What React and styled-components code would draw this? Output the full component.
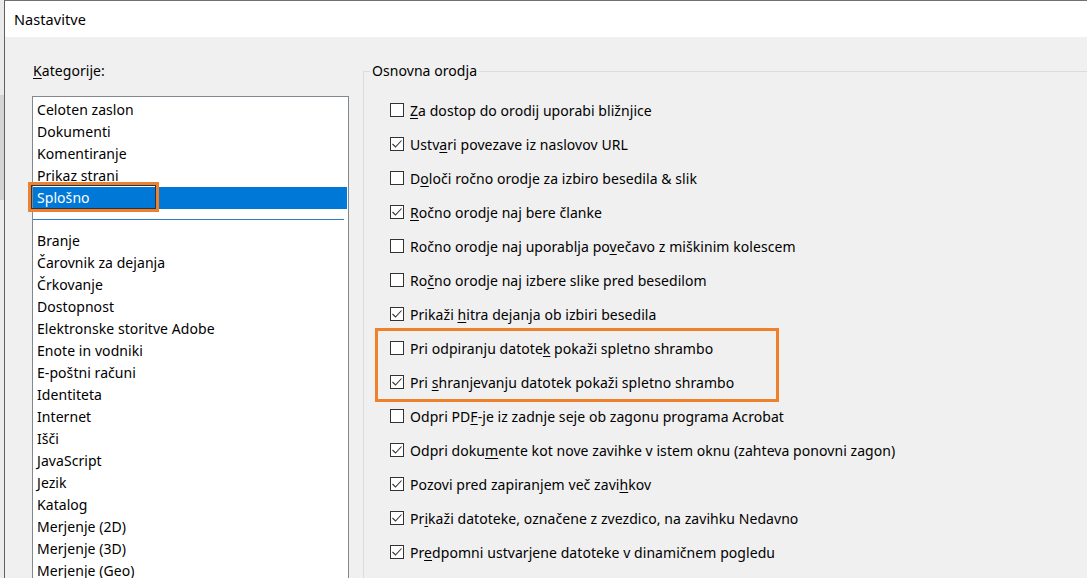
import React from "react";
import styled, { createGlobalStyle } from "styled-components";

const GlobalStyle = createGlobalStyle`
    html, body {
        margin: 0;
        padding: 0;
        overflow: hidden;
        background: #e6e6e6;
    }
    body {
        font-family: "Noto Sans", "Open Sans", sans-serif;
        font-size: 14px;
        letter-spacing: 0.06px;
        color: #000;
    }
`;

const Screen = styled.div`
    display: flex;
    width: 1087px;
    height: 578px;
    overflow: hidden;
`;

const Backdrop = styled.div`
    width: 4px;
    flex-shrink: 0;
    background: linear-gradient(#eaeaea 0 95px, #d4d4d4 95px 200px, #ececec 200px);
`;

const Dialog = styled.div`
    flex: 1;
    display: flex;
    flex-direction: column;
    border-left: 1px solid #5f5f5f;
    border-top: 1px solid #707070;
    min-width: 0;
`;

const TitleBar = styled.div`
    height: 36px;
    flex-shrink: 0;
    background: #fff;
    display: flex;
    align-items: center;
    padding-left: 9px;
    font-size: 14.5px;
`;

const Body = styled.div`
    flex: 1;
    background: #f0f0f0;
    display: grid;
    grid-template-columns: 317px 1fr;
    column-gap: 14px;
    padding-left: 27px;
    min-height: 0;
`;

const Column = styled.div`
    display: flex;
    flex-direction: column;
    min-height: 0;
`;

const Label = styled.div`
    margin-top: 24px;
    line-height: 20px;
    padding-left: 1px;
`;

const ListBox = styled.div`
    margin-top: 15px;
    flex: 1;
    background: #fff;
    border: 1px solid #828790;
    border-bottom: none;
    padding-top: 2px;
`;

const Item = styled.div`
    position: relative;
    height: 22px;
    line-height: 22px;
    padding-left: 4px;
    margin-right: 1px;
    white-space: nowrap;
    background: ${(p) => (p.$selected ? "#0078d7" : "transparent")};
    color: ${(p) => (p.$selected ? "#fff" : "#000")};

    ${(p) =>
        p.$marked &&
        `
        &::after {
            content: "";
            position: absolute;
            left: -5px;
            top: -5px;
            width: 125px;
            height: 24px;
            border: 3px solid #f0812a;
            box-shadow: inset 0 0 0 1px #1f3550;
        }
    `}
`;

const Separator = styled.div`
    height: 21px;
    display: flex;
    align-items: center;
    padding-right: 4px;

    &::before {
        content: "";
        flex: 1;
        height: 1px;
        background: #2f7cc4;
    }
`;

const GroupBox = styled.fieldset`
    margin: 24px 0 0 0;
    padding: 0;
    border: 1px solid #dcdcdc;
    border-right: none;
    border-bottom: none;
    min-width: 0;
`;

const Legend = styled.legend`
    margin-left: 6px;
    padding: 0 2px;
    line-height: 20px;
`;

const Options = styled.div`
    padding: 12px 0 0 26px;
`;

const Row = styled.div`
    height: 34px;
    display: flex;
    align-items: center;
    gap: 6px;
    white-space: nowrap;
`;

const Highlight = styled.div`
    width: 398px;
    margin-left: -12px;
    padding-left: 12px;
    box-sizing: border-box;
    outline: 3px solid #f0812a;
`;

const Box = styled.span`
    width: 14px;
    height: 14px;
    box-sizing: border-box;
    border: 1px solid #333;
    background: #fff;
    flex-shrink: 0;
    display: flex;
    align-items: center;
    justify-content: center;
`;

const Mnemonic = styled.u`
    text-decoration-thickness: 1px;
    text-underline-offset: 2px;
`;

function CheckBox({ checked }) {
    return (
        <Box>
            {checked && (
                <svg width="12" height="12" viewBox="0 0 12 12">
                    <polyline
                        points="1.5,6 4.5,9 10.5,2.5"
                        fill="none"
                        stroke="#333"
                        strokeWidth="1.1"
                    />
                </svg>
            )}
        </Box>
    );
}

function Option({ opt }) {
    const [pre, key, post, checked] = opt;
    return (
        <Row>
            <CheckBox checked={checked} />
            <span>
                {pre}
                <Mnemonic>{key}</Mnemonic>
                {post}
            </span>
        </Row>
    );
}

const topItems = ["Celoten zaslon", "Dokumenti", "Komentiranje", "Prikaz strani", "Splošno"];

const moreItems = [
    "Branje",
    "Čarovnik za dejanja",
    "Črkovanje",
    "Dostopnost",
    "Elektronske storitve Adobe",
    "Enote in vodniki",
    "E-poštni računi",
    "Identiteta",
    "Internet",
    "Išči",
    "JavaScript",
    "Jezik",
    "Katalog",
    "Merjenje (2D)",
    "Merjenje (3D)",
    "Merjenje (Geo)",
];

const before = [
    ["", "Z", "a dostop do orodij uporabi bližnjice", false],
    ["Ustv", "a", "ri povezave iz naslovov URL", true],
    ["D", "o", "loči ročno orodje za izbiro besedila & slik", false],
    ["", "R", "očno orodje naj bere članke", true],
    ["Ročno orodje naj uporablja po", "v", "ečavo z miškinim kolescem", false],
    ["Ro", "č", "no orodje naj izbere slike pred besedilom", false],
    ["Prikaži ", "h", "itra dejanja ob izbiri besedila", true],
];

const marked = [
    ["Pri odpiranju datote", "k", " pokaži spletno shrambo", false],
    ["Pri ", "s", "hranjevanju datotek pokaži spletno shrambo", true],
];

const after = [
    ["Odpri PD", "F", "-je iz zadnje seje ob zagonu programa Acrobat", false],
    ["Odpri doku", "m", "ente kot nove zavihke v istem oknu (zahteva ponovni zagon)", true],
    ["Pozovi pred zapiranjem več zavi", "h", "kov", true],
    ["Pr", "i", "kaži datoteke, označene z zvezdico, na zavihku Nedavno", true],
    ["Pr", "e", "dpomni ustvarjene datoteke v dinamičnem pogledu", true],
];

function App() {
    return (
        <>
            <GlobalStyle />
            <Screen>
                <Backdrop />
                <Dialog>
                    <TitleBar>Nastavitve</TitleBar>
                    <Body>
                        <Column>
                            <Label>
                                <Mnemonic>K</Mnemonic>ategorije:
                            </Label>
                            <ListBox>
                                {topItems.map((name) => (
                                    <Item
                                        key={name}
                                        $selected={name === "Splošno"}
                                        $marked={name === "Splošno"}
                                    >
                                        {name}
                                    </Item>
                                ))}
                                <Separator />
                                {moreItems.map((name) => (
                                    <Item key={name}>{name}</Item>
                                ))}
                            </ListBox>
                        </Column>
                        <GroupBox>
                            <Legend>Osnovna orodja</Legend>
                            <Options>
                                {before.map((opt) => (
                                    <Option key={opt[2]} opt={opt} />
                                ))}
                                <Highlight>
                                    {marked.map((opt) => (
                                        <Option key={opt[2]} opt={opt} />
                                    ))}
                                </Highlight>
                                {after.map((opt) => (
                                    <Option key={opt[2]} opt={opt} />
                                ))}
                            </Options>
                        </GroupBox>
                    </Body>
                </Dialog>
            </Screen>
        </>
    );
}

export default App;
